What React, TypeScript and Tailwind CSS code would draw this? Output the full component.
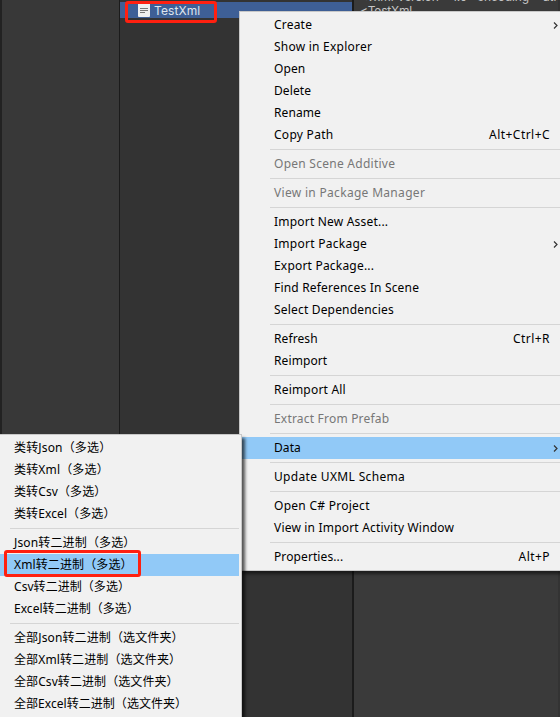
import React from "react";

type Item = { label: string; hint?: string; sub?: boolean; off?: boolean; on?: boolean; track?: string } | null;

const MAIN: Item[] = [
  { label: "Create", sub: true, track: "tracking-[0.2px]" },
  { label: "Show in Explorer", track: "tracking-[0.23px]" },
  { label: "Open" },
  { label: "Delete" },
  { label: "Rename" },
  { label: "Copy Path", hint: "Alt+Ctrl+C", track: "tracking-[0.28px]" },
  null,
  { label: "Open Scene Additive", off: true, track: "tracking-[0.26px]" },
  null,
  { label: "View in Package Manager", off: true, track: "tracking-[0.31px]" },
  null,
  { label: "Import New Asset...", track: "tracking-[0.2px]" },
  { label: "Import Package", sub: true, track: "tracking-[0.27px]" },
  { label: "Export Package...", track: "tracking-[0.2px]" },
  { label: "Find References In Scene", track: "tracking-[0.19px]" },
  { label: "Select Dependencies", track: "tracking-[0.18px]" },
  null,
  { label: "Refresh", hint: "Ctrl+R" },
  { label: "Reimport" },
  null,
  { label: "Reimport All", track: "tracking-[0.2px]" },
  null,
  { label: "Extract From Prefab", off: true, track: "tracking-[0.2px]" },
  null,
  { label: "Data", sub: true, on: true },
  null,
  { label: "Update UXML Schema", track: "tracking-[0.34px]" },
  null,
  { label: "Open C# Project", track: "tracking-[0.27px]" },
  { label: "View in Import Activity Window", track: "tracking-[0.19px]" },
  null,
  { label: "Properties...", hint: "Alt+P" },
];

const SUB: Item[] = [
  { label: "类转Json（多选）", track: "tracking-[0.16px]" },
  { label: "类转Xml（多选）", track: "tracking-[0.16px]" },
  { label: "类转Csv（多选）", track: "tracking-[0.1px]" },
  { label: "类转Excel（多选）", track: "tracking-[0.1px]" },
  null,
  { label: "Json转二进制（多选）", track: "tracking-[0.15px]" },
  { label: "Xml转二进制（多选）", on: true, track: "tracking-[0.12px]" },
  { label: "Csv转二进制（多选）", track: "tracking-[0.05px]" },
  { label: "Excel转二进制（多选）", track: "tracking-[0.04px]" },
  null,
  { label: "全部Json转二进制（选文件夹）", track: "tracking-[0.12px]" },
  { label: "全部Xml转二进制（选文件夹）", track: "tracking-[0.12px]" },
  { label: "全部Csv转二进制（选文件夹）", track: "tracking-[0.08px]" },
  { label: "全部Excel转二进制（选文件夹）", track: "tracking-[0.04px]" },
];

function Chevron() {
  return (
    <svg className="h-[7px] w-[5px] shrink-0" viewBox="0 0 5 7" fill="none" stroke="#333" strokeWidth="1.2">
      <path d="M1 0.5 4 3.5 1 6.5" />
    </svg>
  );
}

function MainMenu() {
  return (
    <div className="absolute left-[239px] top-[11px] h-[560px] w-[322px] border border-[#c8c8c8] bg-[#f1f1f1] py-[2px] shadow-[3px_3px_3px_rgba(0,0,0,0.5)]">
      {MAIN.map((it, i) =>
        it === null ? (
          <div key={i} className="ml-[30px] h-[7px] pt-[3px]">
            <div className="h-px bg-[#d5d5d5]" />
          </div>
        ) : (
          <div
            key={i}
            className={`flex h-[22px] items-center ${it.on ? "ml-[2px] bg-[#91c9f7] pl-[32px]" : "pl-[34px]"} ${it.off ? "text-[#777]" : "text-black"} ${it.sub ? "pr-[2px]" : "pr-[10px]"}`}
          >
            <span className={`flex-1 whitespace-pre ${it.track ?? "tracking-[0.1px]"}`}>{it.label}</span>
            {it.hint && <span className="tracking-[0.45px]">{it.hint}</span>}
            {it.sub && <Chevron />}
          </div>
        ),
      )}
    </div>
  );
}

function SubMenu() {
  return (
    <div className="absolute left-0 top-[434px] h-[300px] w-[242px] border-r border-t border-[#c8c8c8] bg-[#f1f1f1] pr-[2px] pt-[2px] shadow-[3px_4px_3px_rgba(0,0,0,0.65)]">
      {SUB.map((it, i) =>
        it === null ? (
          <div key={i} className="ml-[10px] h-[7px] pt-[3px]">
            <div className="h-px bg-[#d5d5d5]" />
          </div>
        ) : (
          <div
            key={i}
            className={`flex h-[22px] items-center whitespace-nowrap pl-[14px] text-black ${it.track ?? ""} ${it.on ? "bg-[#91c9f7]" : ""}`}
          >
            {it.label}
          </div>
        ),
      )}
    </div>
  );
}

export default function App() {
  return (
    <div className="relative flex h-[717px] w-[560px] overflow-hidden bg-[#333] text-[12px] leading-[22px] [font-family:'Noto_Sans','Noto_Sans_CJK_SC',sans-serif]">
      <div className="w-[120px] border-l-2 border-r border-l-[#222] border-r-[#1b1b1b] bg-[#383838]" />
      <div className="w-[232px] bg-[#333] pt-[2px]">
        <div className="flex h-[16px] items-center bg-[#3e5f96] pl-[18px]">
          <svg className="h-[16px] w-[12px]" viewBox="0 0 12 16">
            <path d="M0 0H12V14Q12 15 11 15H1Q0 15 0 14Z" fill="#efefef" />
            <path d="M2 6.5H10M2 8.5H10M2 10.5H7" stroke="#777" strokeWidth="1" />
          </svg>
          <span className="ml-[4px] pt-[2px] text-[12px] leading-[16px] tracking-[0.1px] text-[#dfe5ee] [font-family:Inter,sans-serif]">TestXml</span>
        </div>
      </div>
      <div className="w-[206px] border-l-2 border-[#1b1b1b] bg-[#3a3a3a]">
        <div className="-mt-[10px] whitespace-pre pl-[6px] text-[12px] leading-[14px] text-[#c4c4c4] [font-family:Inter,sans-serif]">
          <div className="tracking-[-0.1px] [word-spacing:1px]">{'<?xml version="1.0" encoding="utf'}</div>
          <div className="tracking-[-0.2px]">{"<TestXml"}</div>
        </div>
      </div>
      <MainMenu />
      <SubMenu />
      <div className="absolute left-[125px] top-px h-[22px] w-[92px] rounded-[3px] border-[3px] border-[#ff2010]" />
      <div className="absolute left-[4px] top-[550px] h-[27px] w-[137px] rounded-[3px] border-[3px] border-[#ff2010]" />
    </div>
  );
}
